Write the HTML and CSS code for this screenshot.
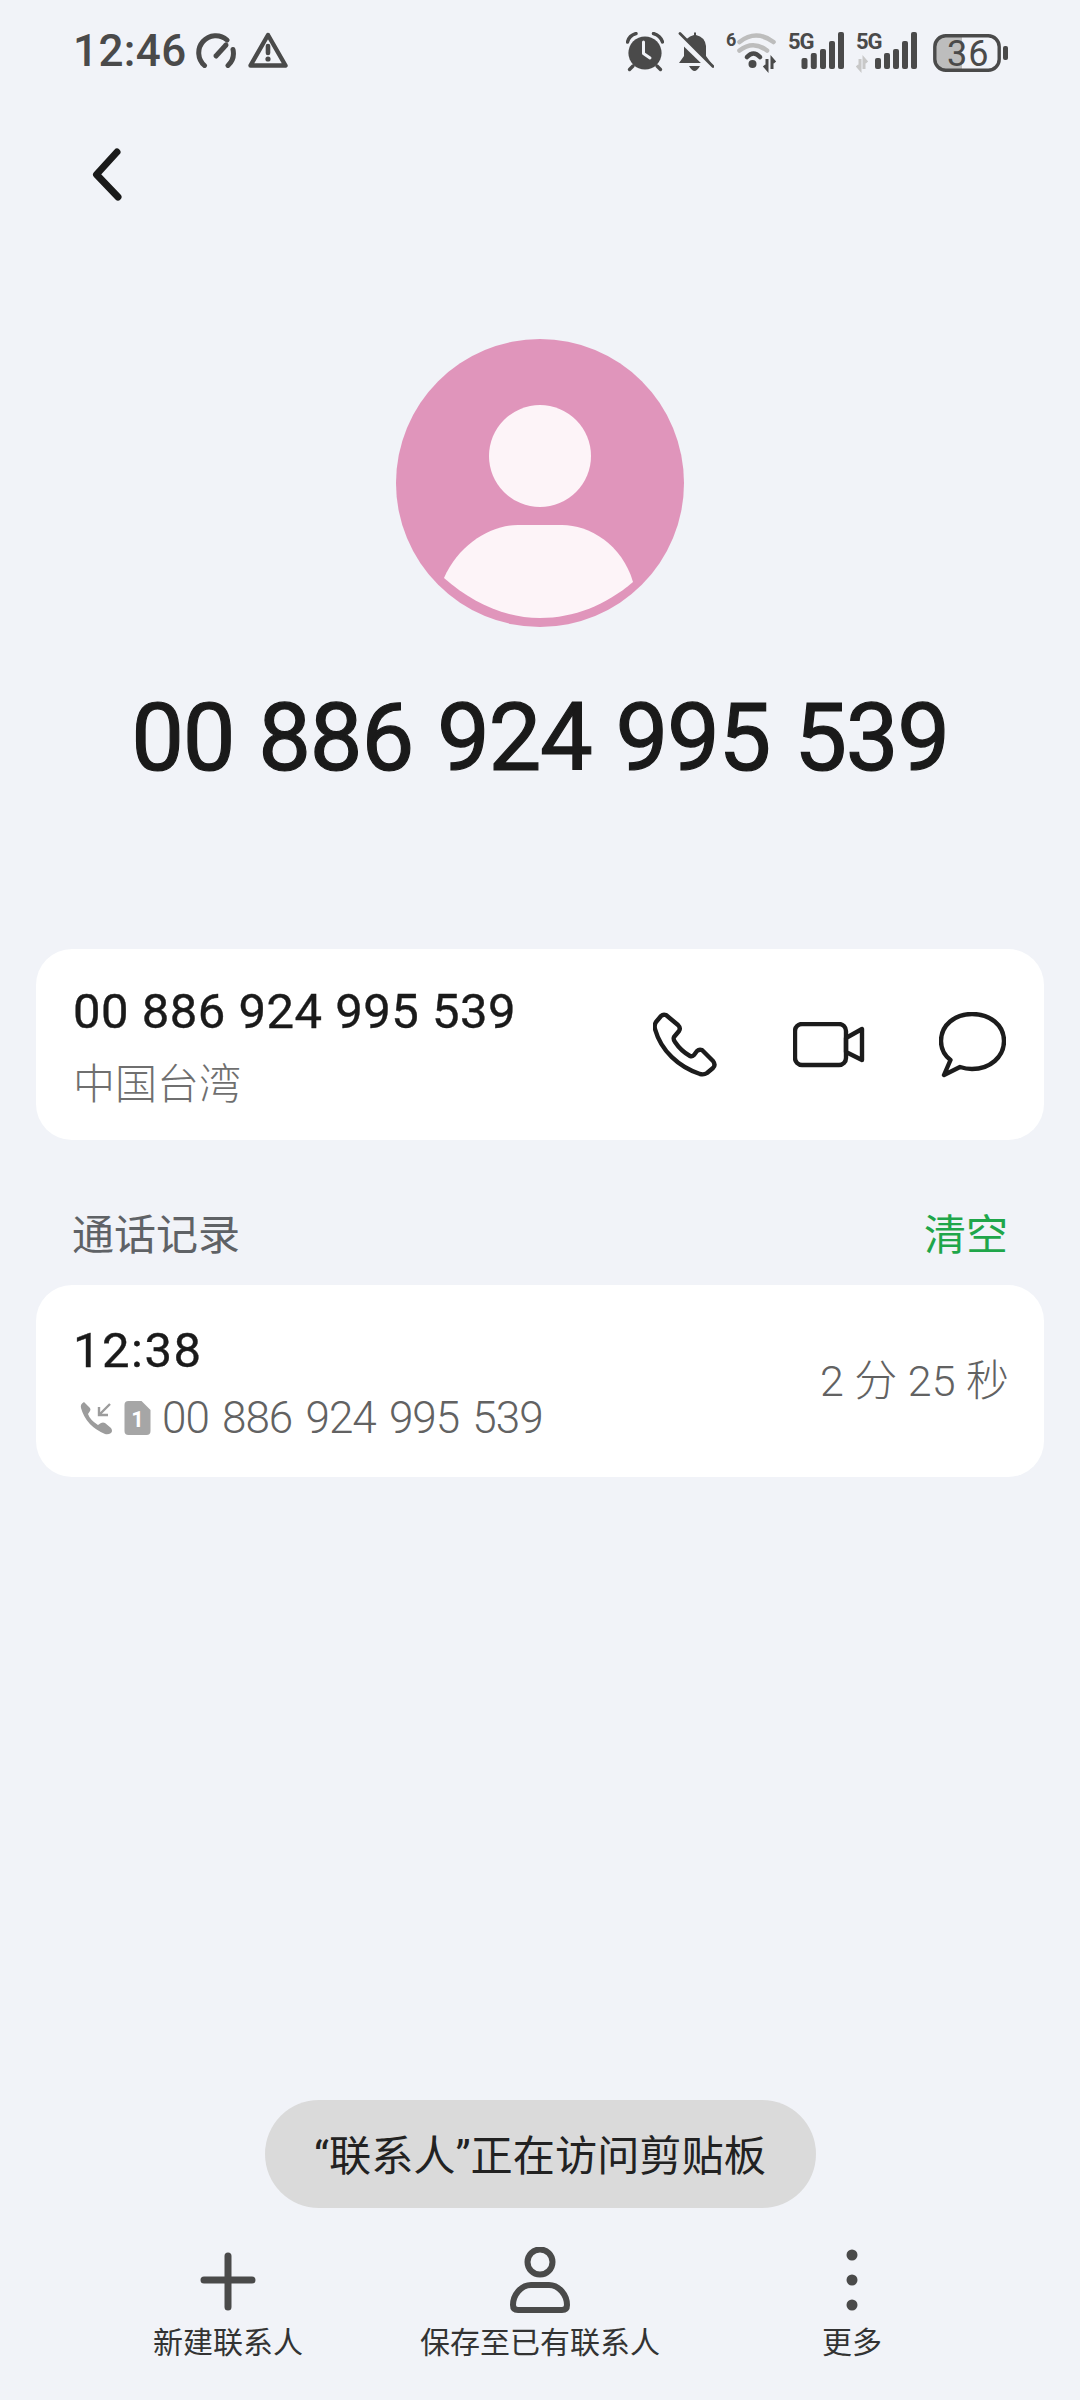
FILE: index.html
```html
<!DOCTYPE html>
<html lang="zh">
<head>
    <meta charset="UTF-8">
    <title>联系人</title>
    <link rel="stylesheet" href="styles.css">
</head>
<body>
    <div class="status">
        <span class="time">12:46</span>
        <svg class="ic-gauge" width="40" height="36" viewBox="0 0 40 36" fill="none" stroke="#4a4a4a" stroke-width="5" stroke-linecap="round">
            <path d="M8.500 33.500A17 17 0 0 1 31 8"/>
            <path d="M37 17.500A17 17 0 0 1 32 33.500"/>
            <path d="M20 24L30 13" stroke-width="5"/>
        </svg>
        <svg class="ic-warn" width="40" height="36" viewBox="0 0 40 36" fill="none" stroke="#4a4a4a">
            <path d="M20 3L37.500 33.500H2.500Z" stroke-width="4.400" stroke-linejoin="round"/>
            <path d="M20 14V21" stroke-width="4.600" stroke-linecap="round"/>
            <circle cx="20" cy="27" r="2.600" fill="#4a4a4a" stroke="none"/>
        </svg>
        <div class="status-right">
            <svg class="ic-alarm" width="38" height="40" viewBox="0 0 38 40">
                <circle cx="19" cy="21" r="16.600" fill="#4a4a4a"/>
                <path d="M1.500 10Q3 3.500 10 1.500M27.500 1.500Q34.500 3.500 36.500 10" fill="none" stroke="#4a4a4a" stroke-width="3.400" stroke-linecap="round"/>
                <path d="M7 34L3.500 37.500M31 34L34.500 37.500" stroke="#4a4a4a" stroke-width="3.400" stroke-linecap="round"/>
                <path d="M17.500 10V21.500L24 26" fill="none" stroke="#f1f3f8" stroke-width="3" stroke-linecap="round" stroke-linejoin="round"/>
            </svg>
            <svg class="ic-bell" width="36" height="40" viewBox="0 0 36 40">
                <path d="M16 0.500H18V3Q27 5 28 14V24L33 31H1L6 24V14Q7 5 16 3Z" fill="#4a4a4a"/>
                <path d="M11 34H22Q19 39 16.500 39Q14 39 11 34Z" fill="#4a4a4a"/>
                <path d="M-1 3L33 36" stroke="#f1f3f8" stroke-width="7"/>
                <path d="M2 1.500L35 34.500" stroke="#4a4a4a" stroke-width="2.800" stroke-linecap="round"/>
            </svg>
            <svg class="ic-wifi" width="54" height="52" viewBox="0 -7 54 52">
                <text x="0" y="13" class="net net-small">6</text>
                <path d="M13.500 9Q30 -4 47.500 9" fill="none" stroke="#bdbdbd" stroke-width="4.600" stroke-linecap="round"/>
                <path d="M13.500 17.500Q27 7 41 17.500" fill="none" stroke="#bdbdbd" stroke-width="4.600" stroke-linecap="round"/>
                <path d="M21 24Q27.500 17 34 24" fill="none" stroke="#4a4a4a" stroke-width="4.600" stroke-linecap="round"/>
                <circle cx="26.500" cy="31" r="4" fill="#4a4a4a"/>
                <path d="M41 26V36L38 32.500M46 36V26L49 29.500" fill="none" stroke="#4a4a4a" stroke-width="3"/>
            </svg>
            <svg class="ic-sig" width="56" height="52" viewBox="0 -7 56 52">
                <text x="0" y="16" class="net">5G</text>
                <rect x="13.500" y="25" width="6" height="11" rx="2" fill="#4a4a4a"/>
                <rect x="22.800" y="20" width="6" height="16" rx="2" fill="#4a4a4a"/>
                <rect x="32" y="16" width="6" height="20" rx="2" fill="#4a4a4a"/>
                <rect x="41" y="8" width="6" height="28" rx="2" fill="#4a4a4a"/>
                <rect x="50" y="-1" width="6" height="37" rx="2" fill="#4a4a4a"/>
            </svg>
            <svg class="ic-sig2" width="61" height="52" viewBox="0 -7 61 52">
                <text x="0" y="16" class="net">5G</text>
                <path d="M4 26V36L1 32.500M8 36V26L11 29.500" fill="none" stroke="#c8c8c8" stroke-width="3"/>
                <rect x="19" y="25" width="6" height="11" rx="2" fill="#4a4a4a"/>
                <rect x="28" y="20" width="6" height="16" rx="2" fill="#4a4a4a"/>
                <rect x="37" y="16" width="6" height="20" rx="2" fill="#4a4a4a"/>
                <rect x="46" y="8" width="6" height="28" rx="2" fill="#4a4a4a"/>
                <rect x="55" y="-1" width="6" height="37" rx="2" fill="#4a4a4a"/>
            </svg>
            <svg class="ic-batt" width="76" height="52" viewBox="0 -8 76 52">
                <path d="M12 2H29V36H12Q2 36 2 26V12Q2 2 12 2Z" fill="#bdbdbd"/>
                <rect x="1.800" y="1.800" width="64.400" height="34.400" rx="11" fill="none" stroke="#4a4a4a" stroke-width="3.400"/>
                <rect x="70" y="12" width="5" height="14" rx="2" fill="#4a4a4a"/>
                <text x="14" y="32" class="batt-num">36</text>
            </svg>
        </div>
    </div>

    <div class="topbar">
        <svg width="40" height="64" viewBox="0 0 40 64" fill="none" stroke="#1a1a1a" stroke-width="7" stroke-linecap="round" stroke-linejoin="round">
            <path d="M29 9L8.500 31.500L30 54"/>
        </svg>
    </div>

    <div class="hero">
        <svg class="avatar" width="288" height="288" viewBox="0 0 288 288">
            <circle cx="144" cy="144" r="144" fill="#e095bb"/>
            <circle cx="144" cy="117" r="51" fill="#fdf4f8"/>
            <path d="M48 239C63 205 95 186 122 186H166C193 186 226 205 237 243C210 266 178 279 144 279C110 279 76 264 48 239Z" fill="#fdf4f8"/>
        </svg>
        <div class="name">00 886 924 995 539</div>
    </div>

    <div class="card number-card">
        <div class="info">
            <div class="num num-wide">00 886 924 995 539</div>
            <div class="loc">中国台湾</div>
        </div>
        <div class="actions">
            <svg width="66" height="66" viewBox="0 0 66 66" fill="none" stroke="#1c1c1c" stroke-width="4.400" stroke-linejoin="round">
                <path d="M13 3L25 13Q28 16 26 19L21 25Q20 27 22 30Q28 39 37 44Q39 45 41 43L44 39Q46 37 49 38L60 49Q63 53 60 56L54 61Q51 63 47 62C26 55 8 39 2 17Q1 13 3 10L8 4Q10 2 13 3Z"/>
            </svg>
            <svg width="72" height="46" viewBox="0 0 72 46" fill="none" stroke="#1c1c1c" stroke-width="4.400" stroke-linejoin="round">
                <rect x="2" y="2" width="51" height="41" rx="7"/>
                <path d="M53 16L69 7V38L53 30Z"/>
            </svg>
            <svg width="67" height="66" viewBox="0 0 67 66" fill="none" stroke="#1c1c1c" stroke-width="4.400" stroke-linejoin="round">
                <path d="M11.500 48L5 63L21 55Q27 57 33 57C51 57 65 45 65 29C65 13 51 2 33 2C16 2 2 13 2 29C2 36 5 43 11.500 48Z"/>
            </svg>
        </div>
    </div>

    <div class="log-head">
        <span class="log-title">通话记录</span>
        <span class="log-clear">清空</span>
    </div>

    <div class="card log-card">
        <div class="info">
            <div class="num num-time">12:38</div>
            <div class="log-line">
                <svg class="ic-in" width="34" height="34" viewBox="0 0 34 34">
                    <path d="M4 1L10 7Q11 9 10 10L8 13Q10 19 18 24L21 22Q23 21 25 22L31 27Q33 30 31 32Q28 34 25 33Q6 25 1 7Q0 3 4 1Z" fill="#9c9c9c"/>
                    <path d="M30 3L19 14M19 6V14H28" fill="none" stroke="#9c9c9c" stroke-width="2.400"/>
                </svg>
                <svg class="ic-sim" width="27" height="34" viewBox="0 0 26 34">
                    <path d="M4 0H17L26 9V30Q26 34 22 34H4Q0 34 0 30V4Q0 0 4 0Z" fill="#a6a6a6"/>
                    <text x="13" y="26" class="sim-num">1</text>
                </svg>
                <span class="log-num">00 886 924 995 539</span>
            </div>
        </div>
        <div class="duration">2 分 25 秒</div>
    </div>

    <div class="toast">“联系人”正在访问剪贴板</div>

    <div class="tabs">
        <div class="tab">
            <svg width="66" height="66" viewBox="0 0 66 66" fill="none" stroke="#4a4a4a" stroke-width="7" stroke-linecap="round">
                <path d="M33 9V60M9 33H57"/>
            </svg>
            <span>新建联系人</span>
        </div>
        <div class="tab">
            <svg width="66" height="66" viewBox="0 0 66 66" fill="none" stroke="#4a4a4a" stroke-width="6" stroke-linejoin="round">
                <circle cx="33" cy="15" r="12.500"/>
                <path d="M24 38H42C52 38 60 48 60 58Q60 63 55 63H11Q6 63 6 58C6 48 14 38 24 38Z"/>
            </svg>
            <span>保存至已有联系人</span>
        </div>
        <div class="tab">
            <svg width="66" height="66" viewBox="0 0 66 66" fill="#4a4a4a">
                <circle cx="33" cy="8" r="5.500"/>
                <circle cx="33" cy="33" r="5.500"/>
                <circle cx="33" cy="58" r="5.500"/>
            </svg>
            <span>更多</span>
        </div>
    </div>
</body>
</html>
```

FILE: styles.css
```css
*{
    margin: 0;
    padding: 0;
    box-sizing: border-box;
}
body{
    width: 1080px;
    height: 2400px;
    overflow: hidden;
    display: flex;
    flex-direction: column;
    background: #f1f3f8;
    font-family: Roboto, "Noto Sans CJK SC", sans-serif;
}
svg{
    display: block;
    flex: none;
}

/* status bar */
.status{
    height: 100px;
    padding-left: 73px;
    display: flex;
    align-items: center;
}
.time{
    font-size: 44px;
    font-weight: 500;
    color: #4a4a4a;
    letter-spacing: 0.4px;
    padding-top: 2px;
}
.ic-gauge{
    margin-left: 9px;
}
.ic-warn{
    margin-left: 12px;
}
.status-right{
    margin-left: auto;
    padding: 4px 71px 0 0;
    display: flex;
    align-items: center;
}
.ic-bell{
    margin-left: 14px;
}
.ic-wifi{
    margin-left: 12px;
}
.ic-sig{
    margin-left: 8px;
}
.ic-sig2{
    margin-left: 12px;
}
.ic-batt{
    margin-left: 16px;
}
.net{
    font-size: 22px;
    font-weight: 700;
    fill: #4a4a4a;
    letter-spacing: -1px;
}
.net-small{
    font-size: 18px;
}
.batt-num{
    font-size: 36px;
    fill: #4a4a4a;
    letter-spacing: 1px;
}

.topbar{
    padding: 43px 0 0 88px;
    height: 239px;
}

/* avatar and big number */
.hero{
    display: flex;
    flex-direction: column;
    align-items: center;
    margin-bottom: 156px;
}
.name{
    margin-top: 56px;
    font-size: 94px;
    line-height: 110px;
    font-weight: 400;
    -webkit-text-stroke: 1.2px #1a1a1a;
    color: #1a1a1a;
    letter-spacing: -1.3px;
    word-spacing: 2px;
    white-space: nowrap;
}

.card{
    margin: 0 36px;
    background: #fff;
    border-radius: 36px;
    display: flex;
    align-items: center;
    padding: 0 35px 0 37px;
}
.number-card{
    height: 191px;
    padding-right: 38px;
}
.log-card{
    height: 192px;
}
.info{
    flex: 1;
    padding-top: 5px;
}
.num{
    font-size: 49px;
    line-height: 60px;
    -webkit-text-stroke: 0.4px #1a1a1a;
    color: #1a1a1a;
}
.num-wide{
    letter-spacing: 0.5px;
}
.num-time{
    letter-spacing: 1.500px;
}
.loc{
    margin-top: 15px;
    font-size: 42px;
    line-height: 56px;
    font-weight: 300;
    color: #6f6f6f;
}
.actions{
    display: flex;
    align-items: center;
    gap: 74px;
}

.log-head{
    margin: 63px 72px 26px 72px;
    height: 56px;
    display: flex;
    justify-content: space-between;
    align-items: center;
    font-size: 42px;
}
.log-title{
    color: #5f6266;
}
.log-clear{
    color: #1fa64a;
}
.log-line{
    margin-top: 9px;
    height: 56px;
    display: flex;
    align-items: center;
    padding-left: 7px;
}
.ic-sim{
    margin-left: 10px;
}
.sim-num{
    font-size: 22px;
    font-weight: 700;
    fill: #fff;
    text-anchor: middle;
}
.log-num{
    margin-left: 11px;
    font-size: 44px;
    font-weight: 300;
    color: #626262;
    letter-spacing: -1px;
    word-spacing: 3.500px;
}
.duration{
    font-size: 43px;
    font-weight: 300;
    color: #626262;
    margin-bottom: 8px;
}

/* toast and bottom tabs */
.toast{
    margin-top: auto;
    align-self: center;
    width: 551px;
    height: 108px;
    padding-bottom: 4px;
    border-radius: 54px;
    background: #dadada;
    display: flex;
    align-items: center;
    justify-content: center;
    font-size: 42.200px;
    color: #222;
}
.tabs{
    padding: 39px 72px 37px;
    display: grid;
    grid-template-columns: repeat(3, 1fr);
}
.tab{
    display: flex;
    flex-direction: column;
    align-items: center;
    gap: 10px;
    font-size: 30px;
    line-height: 40px;
    color: #333;
}
```
